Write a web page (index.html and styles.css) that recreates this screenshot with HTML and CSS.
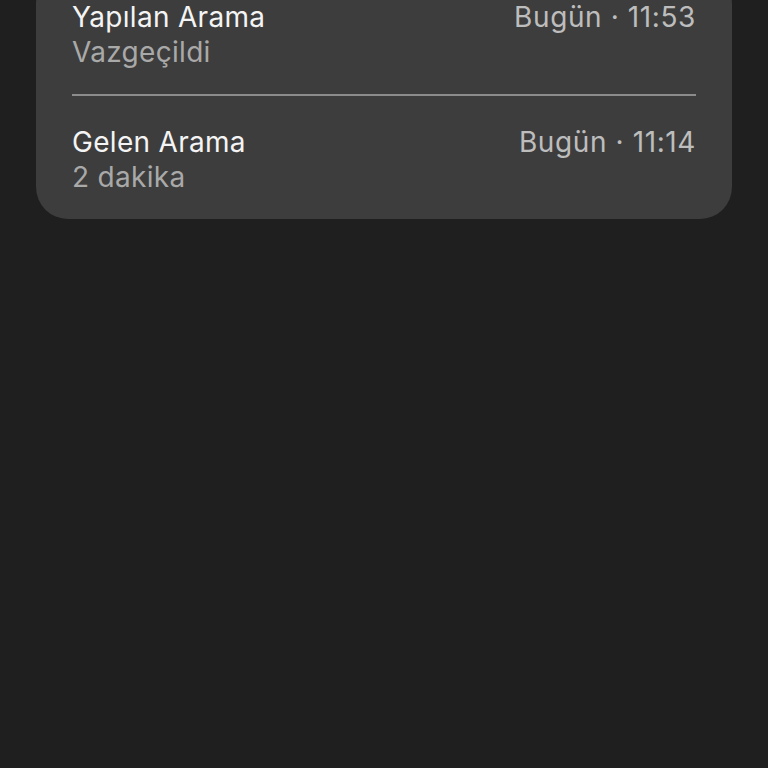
FILE: index.html
```html
<!DOCTYPE html>
<html>
<head>
  <link rel="stylesheet" href="styles.css">
</head>
<body>
  <div class="call-list">
    <div class="call-row">
      <div class="call-info">
        <div class="call-type">Yapılan Arama</div>
        <div class="call-detail">Vazgeçildi</div>
      </div>
      <div class="call-time">Bugün · 11:53</div>
    </div>

    <div class="call-row">
      <div class="call-info">
        <div class="call-type">Gelen Arama</div>
        <div class="call-detail">2 dakika</div>
      </div>
      <div class="call-time">Bugün · 11:14</div>
    </div>
  </div>
</body>
</html>
```

FILE: styles.css
```css
/* Page */
body {
  margin: 0;
  background-color: #1f1f1f;
  font-family: Inter, "Noto Sans", sans-serif;
  height: 768px;
  overflow: hidden;
}

/* Card with the call history */
.call-list {
  margin: -28px 36px 0 36px;
  padding: 0 36px;
  background-color: #3d3d3d;
  border-radius: 32px;
}

.call-row {
  display: flex;
  justify-content: space-between;
  align-items: flex-start;
  padding: 28px 0 24px 0;
}

.call-row + .call-row {
  border-top: 2px solid #8c8c8c;
  padding-top: 29px;
}

.call-type,
.call-detail,
.call-time {
  font-size: 28px;
  line-height: 35px;
  letter-spacing: 0.3px;
}

.call-type {
  color: #f4f4f4;
}

.call-detail {
  color: #a9a9a9;
}

.call-time {
  color: #bdbdbd;
  letter-spacing: 0.6px;
}
```
